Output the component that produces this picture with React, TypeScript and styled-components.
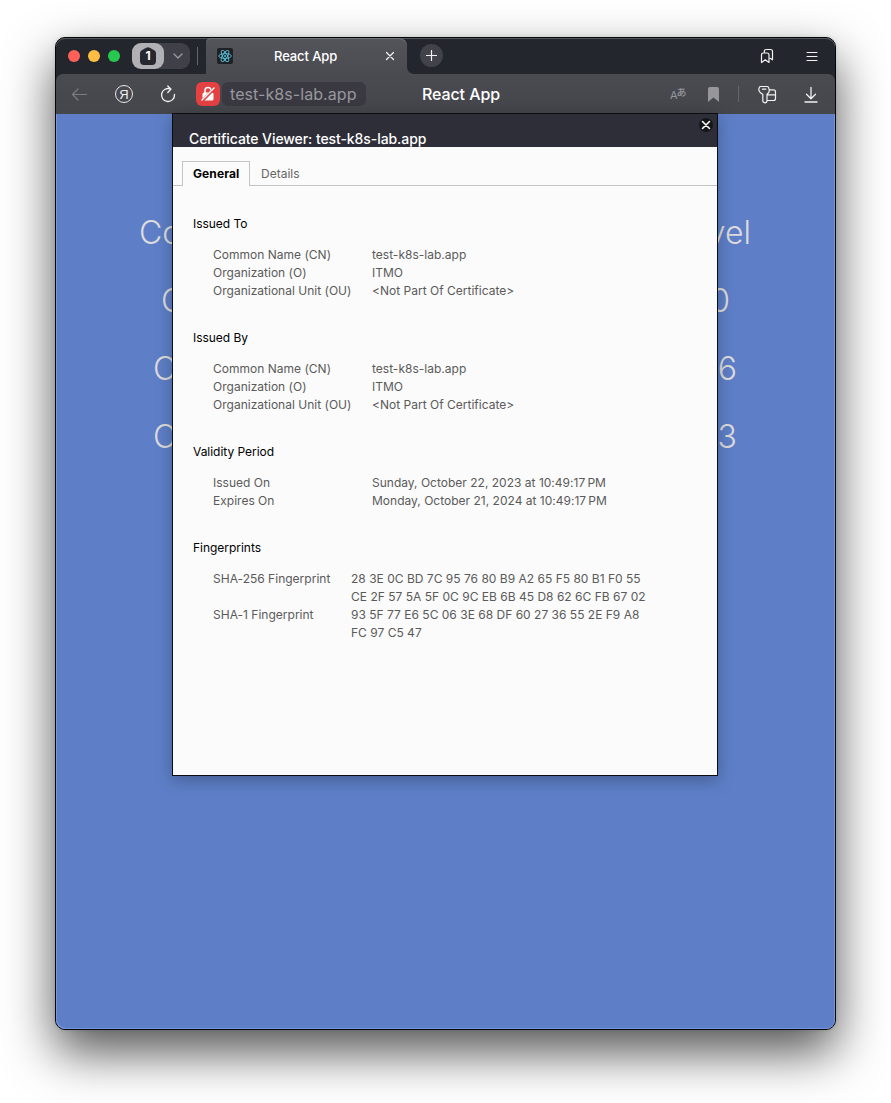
import React from 'react';
import styled, { createGlobalStyle } from 'styled-components';

const GlobalStyle = createGlobalStyle`
  * { box-sizing: border-box; }
  body {
    margin: 0;
    background: #fff;
    overflow: hidden;
    font-family: Inter, "Liberation Sans", sans-serif;
  }
`;

const Desktop = styled.main`
  width: 891px;
  height: 1103px;
  padding: 37px 55px 0;
  overflow: hidden;
`;

const Window = styled.section`
  position: relative;
  display: flex;
  flex-direction: column;
  width: 781px;
  height: 993px;
  border: 1px solid #050608;
  border-radius: 10px;
  background: #24262e;
  box-shadow: 0 22px 50px rgba(0, 0, 0, 0.68), 0 0 4px rgba(0, 0, 0, 0.12);
`;

const TabStrip = styled.header`
  display: flex;
  flex: none;
  height: 36px;
  border-radius: 9px 9px 0 0;
  background: #24262e;
  box-shadow: inset 0 1px #55565c;
`;

const WindowControls = styled.div`
  display: flex;
  align-items: center;
  width: 150px;
  padding-left: 12px;
`;

const Light = styled.span<{ $color: string }>`
  width: 12px;
  height: 12px;
  margin-right: 8px;
  border-radius: 50%;
  background: ${(p) => p.$color};
`;

const TabGroup = styled.div`
  display: flex;
  align-items: center;
  width: 58px;
  height: 26px;
  margin-left: 4px;
  flex: none;
  border-radius: 9px;
  background: #3f4048;
`;

const TabCount = styled.div`
  display: grid;
  place-items: center;
  width: 32px;
  height: 26px;
  border-radius: 9px;
  background: #b1b0b5;
`;

const House = styled.div`
  position: relative;
  display: grid;
  place-items: center;
  width: 16px;
  height: 18px;
  color: #fff;
  font-size: 12px;
  font-weight: 700;
  line-height: 18px;
  svg { position: absolute; inset: 0; }
  span { position: relative; }
`;

const GroupArrow = styled.div`
  display: grid;
  place-items: center;
  flex: 1;
  padding-left: 2px;
`;

const Divider = styled.span<{ $height: number; $gap: string }>`
  flex: none;
  width: 1px;
  height: ${(p) => p.$height}px;
  margin: ${(p) => p.$gap};
  background: #65666c;
`;

const Tab = styled.div`
  display: flex;
  align-items: center;
  width: 201px;
  height: 36px;
  padding: 0 11px;
  border-radius: 5px 8px 0 0;
  background: linear-gradient(#54545b, #4a4a51);
  box-shadow: inset 0 1px #707177;
`;

const Favicon = styled.span`
  display: grid;
  place-items: center;
  width: 16px;
  height: 16px;
  border-radius: 2px;
  background: #202124;
`;

const TabTitle = styled.span`
  flex: 1;
  padding-left: 41px;
  color: #fff;
  font-size: 13px;
  font-weight: 500;
  letter-spacing: -0.1px;
  white-space: nowrap;
`;

const StripEndBack = styled.div`
  flex: 1;
  background: #4a4a51;
  border-radius: 0 9px 0 0;
`;

const StripEnd = styled.div`
  display: flex;
  align-items: center;
  height: 36px;
  padding: 0 17px 0 13px;
  border-radius: 0 9px 0 7px;
  background: #24262e;
  box-shadow: inset 0 1px #55565c;
`;

const NewTab = styled.span`
  display: grid;
  place-items: center;
  width: 23px;
  height: 23px;
  margin-bottom: 1px;
  border-radius: 50%;
  background: #41424a;
`;

const Spacer = styled.span`
  flex: 1;
`;

const Toolbar = styled.nav`
  display: flex;
  flex: none;
  align-items: center;
  height: 40px;
  padding: 0 17px 0 15px;
  border-radius: 7px 7px 0 0;
  background: linear-gradient(#4a4a51, #45454c);
`;

const YandexButton = styled.span`
  display: grid;
  place-items: center;
  width: 18px;
  height: 18px;
  margin-left: 27px;
  border: 1.3px solid #e8e8ea;
  border-radius: 50%;
  color: #f0f0f2;
  font-family: "Liberation Sans", sans-serif;
  font-size: 13px;
  line-height: 15px;
`;

const IconSlot = styled.span<{ $gap: number }>`
  display: flex;
  flex: none;
  margin-left: ${(p) => p.$gap}px;
`;

const InsecureBadge = styled.span`
  display: grid;
  place-items: center;
  width: 24px;
  height: 24px;
  margin-left: 19px;
  border-radius: 6px;
  background: #e54042;
`;

const Address = styled.span`
  width: 144px;
  height: 24px;
  margin-left: 2px;
  padding-left: 8px;
  border-radius: 6px;
  background: #3a3942;
  color: #97979c;
  font-size: 16px;
  letter-spacing: 0.07px;
  line-height: 24px;
  white-space: nowrap;
`;

const PageTitle = styled.span`
  width: 80px;
  margin-left: 56px;
  color: #fff;
  font-size: 16px;
  font-weight: 500;
  letter-spacing: -0.1px;
  line-height: 24px;
  white-space: nowrap;
`;

const Translate = styled.span`
  display: flex;
  align-items: flex-start;
  width: 17px;
  height: 16px;
  color: #96969b;
  font-size: 11px;
  line-height: 19px;
  sup {
    font: 500 10px/11px "Noto Sans CJK JP", sans-serif;
    margin-left: -1px;
    vertical-align: top;
  }
`;

const Page = styled.div`
  display: flex;
  flex: 1;
  flex-direction: column;
  align-items: center;
  padding-top: 85px;
  border-radius: 0 0 9px 9px;
  background: #5e7fc8;
  box-shadow: inset 1px -1px #7595dc, inset -1px 0 #7595dc;
`;

const PageLine = styled.p<{ $left: number; $right: number }>`
  display: flex;
  align-self: stretch;
  justify-content: space-between;
  height: 68px;
  margin: 0;
  padding: 0 ${(p) => p.$right}px 0 ${(p) => p.$left}px;
  color: #dcdcdc;
  font-size: 32px;
  font-weight: 350;
  line-height: 68px;
`;

const Dialog = styled.section`
  position: absolute;
  top: 75px;
  left: 116px;
  display: flex;
  flex-direction: column;
  width: 546px;
  height: 663px;
  border: 1px solid #0c0d12;
  background: #fbfbfb;
  box-shadow: 0 4px 16px rgba(0, 0, 0, 0.28);
`;

const DialogHeader = styled.header`
  display: flex;
  justify-content: space-between;
  height: 33px;
  padding: 0 4px 0 16px;
  overflow: hidden;
  background: #2e2e38;
`;

const DialogTitle = styled.h1`
  margin: 15px 0 0;
  color: #fff;
  font-size: 14px;
  font-weight: 500;
  letter-spacing: -0.08px;
  line-height: 20px;
  white-space: nowrap;
`;

const CloseButton = styled.span`
  display: grid;
  place-items: center;
  width: 14px;
  height: 14px;
  margin-top: 4px;
  border-radius: 50%;
  background: #15161a;
`;

const Tabs = styled.div`
  display: flex;
  height: 39px;
  padding: 14px 0 0 9px;
  border-bottom: 1px solid #c3c3c3;
  font-size: 12px;
  line-height: 24px;
`;

const ActiveTab = styled.span`
  width: 68px;
  height: 25px;
  padding-left: 10px;
  border: 1px solid #c3c3c3;
  border-bottom: 0;
  background: #fbfbfb;
  color: #000;
  font-weight: 700;
  letter-spacing: 0.1px;
`;

const InactiveTab = styled.span`
  padding: 1px 0 0 11px;
  color: #666;
`;

const Certificate = styled.div`
  padding: 29px 20px 0;
  font-size: 12px;
  line-height: 18px;
`;

const Group = styled.section`
  margin-bottom: 29px;
`;

const GroupTitle = styled.h2`
  margin: 0 0 13px;
  color: #000;
  font-size: 12px;
  font-weight: 400;
  letter-spacing: -0.03px;
  line-height: 18px;
`;

const Fields = styled.dl<{ $labelWidth: number }>`
  display: grid;
  grid-template-columns: ${(p) => p.$labelWidth}px auto;
  margin: 0 0 0 20px;
  color: #5a5a5a;
  letter-spacing: 0.01px;
  white-space: pre;
  dt, dd { margin: 0; }
`;

type Field = [string, string];
type GroupData = { title: string; labelWidth: number; fields: Field[] };

const subject: Field[] = [
  ['Common Name (CN)', 'test-k8s-lab.app'],
  ['Organization (O)', 'ITMO'],
  ['Organizational Unit (OU)', '<Not Part Of Certificate>'],
];

const groups: GroupData[] = [
  { title: 'Issued To', labelWidth: 159, fields: subject },
  { title: 'Issued By', labelWidth: 159, fields: subject },
  {
    title: 'Validity Period',
    labelWidth: 159,
    fields: [
      ['Issued On', 'Sunday, October 22, 2023 at 10:49:17\u202fPM'],
      ['Expires On', 'Monday, October 21, 2024 at 10:49:17\u202fPM'],
    ],
  },
  {
    title: 'Fingerprints',
    labelWidth: 138,
    fields: [
      ['SHA-256 Fingerprint', '28 3E 0C BD 7C 95 76 80 B9 A2 65 F5 80 B1 F0 55\nCE 2F 57 5A 5F 0C 9C EB 6B 45 D8 62 6C FB 67 02'],
      ['SHA-1 Fingerprint', '93 5F 77 E6 5C 06 3E 68 DF 60 27 36 55 2E F9 A8\nFC 97 C5 47'],
    ],
  },
];

const Stroke = ({ w, h, d, color = '#f2f2f3', sw = 1.3 }: { w: number; h: number; d: string; color?: string; sw?: number }) => (
  <svg width={w} height={h} viewBox={`0 0 ${w} ${h}`} fill="none" stroke={color} strokeWidth={sw} strokeLinecap="round" strokeLinejoin="round">
    <path d={d} />
  </svg>
);

export default function App() {
  return (
    <Desktop>
      <GlobalStyle />
      <Window>
        <TabStrip>
          <WindowControls>
            <Light $color="#ff6159" />
            <Light $color="#ffbd44" />
            <Light $color="#28c850" />
            <TabGroup>
              <TabCount>
                <House>
                  <svg width="16" height="18" viewBox="0 0 16 18">
                    <path d="M6.2.8Q8-.4 9.8.8L14.2 3.2Q16 4.2 16 6V14Q16 18 12 18H4Q0 18 0 14V6Q0 4.2 1.8 3.2Z" fill="#27282f" />
                  </svg>
                  <span>1</span>
                </House>
              </TabCount>
              <GroupArrow>
                <Stroke w={10} h={6} d="M1 1L5 5L9 1" color="#9b9ba0" />
              </GroupArrow>
            </TabGroup>
            <Divider $height={18} $gap="0 0 0 7px" />
          </WindowControls>
          <Tab>
            <Favicon>
              <svg width="14" height="14" viewBox="-7 -7 14 14" fill="none" stroke="#58bfdc" strokeWidth=".9">
                <ellipse rx="6.3" ry="2.4" />
                <ellipse rx="6.3" ry="2.4" transform="rotate(60)" />
                <ellipse rx="6.3" ry="2.4" transform="rotate(120)" />
                <circle r="1" fill="#58bfdc" stroke="none" />
              </svg>
            </Favicon>
            <TabTitle>React App</TabTitle>
            <Stroke w={12} h={12} d="M2.5 2.5L9.5 9.5M9.5 2.5L2.5 9.5" />
          </Tab>
          <StripEndBack>
            <StripEnd>
              <NewTab>
                <Stroke w={11} h={11} d="M5.5 .5V10.5M.5 5.5H10.5" sw={1.2} />
              </NewTab>
              <Spacer />
              <Stroke w={14} h={16} d="M1.5 7Q1.5 5 3.5 5H7Q9 5 9 7V14.5L5.200 11.8L1.5 14.5ZM4.3 4.7V3.5Q4.3 1.5 6.3 1.5H10.5Q12.5 1.5 12.5 3.5V11.8L10.2 10.300" sw={1.2} />
              <IconSlot $gap={32}>
                <Stroke w={12} h={11} d="M1 1.5H11M1 5.5H11M1 9.5H11" sw={1} />
              </IconSlot>
            </StripEnd>
          </StripEndBack>
        </TabStrip>
        <Toolbar>
          <Stroke w={17} h={14} d="M15.5 7.5H1.500M7 2L1.500 7.5L7 13" color="#7c7c82" sw={1.2} />
          <YandexButton>Я</YandexButton>
          <IconSlot $gap={27}>
            <Stroke w={17} h={18} d="M10.500 4A6.5 6.5 0 1 0 14.500 9.5M7.8 1L11 4.100L7.8 7.5" />
          </IconSlot>
          <InsecureBadge>
            <svg width="16" height="16" viewBox="0 0 16 16" fill="none">
              <rect x="2.5" y="6.500" width="11" height="8" rx="1.5" fill="#fff" />
              <path d="M5 7V4.500A3 3 0 0 1 11 4.500V7" stroke="#fff" strokeWidth="1.6" />
              <path d="M2 15L14.500 2.500" stroke="#e54042" strokeWidth="3" />
              <path d="M1.500 14.500L14.500 1.500" stroke="#fff" strokeWidth="1.2" />
            </svg>
          </InsecureBadge>
          <Address>test-k8s-lab.app</Address>
          <PageTitle>React App</PageTitle>
          <Spacer />
          <Translate>A<sup>あ</sup></Translate>
          <IconSlot $gap={21}>
            <svg width="11" height="15" viewBox="0 0 11 15">
              <path d="M2 0H9Q11 0 11 2V15L5.5 10.5L0 15V2Q0 0 2 0Z" fill="#96969b" />
            </svg>
          </IconSlot>
          <Divider $height={16} $gap="0 19px" />
          <Stroke w={19} h={19} d="M2.500 1.5H9Q10.2 1.5 10.600 2.600Q12.500 7.500 9 9.300V15.500Q9 17.800 6.800 17.800Q4.800 17.800 4.800 15.500V9.300Q-.500 6.500 1.300 2.500Q1.600 1.500 2.500 1.500ZM4.500 4.2H7.800M11.500 4.800H15.500Q17.500 4.800 17.500 6.800V13.500Q17.500 15.500 15.500 15.500H9M9 9.800H17.500" sw={1.2} />
          <IconSlot $gap={27}>
            <Stroke w={14} h={17} d="M7 1.500V12.500M2.500 8.200L7 12.700L11.500 8.200M1 16H13" />
          </IconSlot>
        </Toolbar>
        <Page>
          <PageLine $left={83} $right={84}><span>Co</span><span>vel</span></PageLine>
          <PageLine $left={105} $right={105}><span>C</span><span>0</span></PageLine>
          <PageLine $left={97} $right={98}><span>C</span><span>6</span></PageLine>
          <PageLine $left={97} $right={98}><span>C</span><span>3</span></PageLine>
        </Page>
        <Dialog>
          <DialogHeader>
            <DialogTitle>Certificate Viewer: test-k8s-lab.app</DialogTitle>
            <CloseButton>
              <Stroke w={10} h={10} d="M1.5 1.5L8.5 8.5M8.5 1.5L1.5 8.5" color="#fff" sw={1.6} />
            </CloseButton>
          </DialogHeader>
          <Tabs>
            <ActiveTab>General</ActiveTab>
            <InactiveTab>Details</InactiveTab>
          </Tabs>
          <Certificate>
            {groups.map((g) => (
              <Group key={g.title}>
                <GroupTitle>{g.title}</GroupTitle>
                <Fields $labelWidth={g.labelWidth}>
                  {g.fields.map(([label, value]) => (
                    <React.Fragment key={label}>
                      <dt>{label}</dt>
                      <dd>{value}</dd>
                    </React.Fragment>
                  ))}
                </Fields>
              </Group>
            ))}
          </Certificate>
        </Dialog>
      </Window>
    </Desktop>
  );
}
